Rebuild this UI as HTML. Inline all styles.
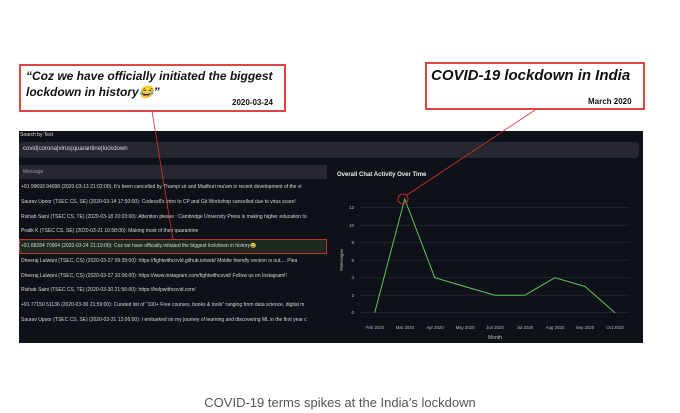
<!DOCTYPE html>
<html><head><meta charset="utf-8"><style>
body{margin:0;width:680px;height:413px;background:#fff;position:relative;overflow:hidden;font-family:"Liberation Sans",sans-serif}
.a{position:absolute}
.panel{left:19px;top:131px;width:624px;height:212px;background:#0e1117}
.row{position:absolute;left:21px;width:306px;font-size:5px;color:#d8d8d8;white-space:nowrap;overflow:hidden;height:14px;line-height:14px}
.box{border:2px solid #e04545;background:#fff;box-sizing:border-box}
</style></head><body>
<div class="a panel"></div>
<div class="a" style="left:20px;top:132px;font-size:5px;color:#ddd">Search by Text</div>
<div class="a" style="left:19px;top:142px;width:620px;height:16px;background:#262730;border-radius:3px"></div>
<div class="a" style="left:23px;top:146px;font-size:6px;color:#ddd">covid|corona|virus|quarantine|lockdown</div>
<div class="a" style="left:19px;top:165px;width:308px;height:14px;background:#262730"></div>
<div class="a" style="left:23px;top:169px;font-size:5px;color:#999">Message</div>
<div class="row" style="top:180px">+91 99693 94098 (2020-03-13 21:02:00): It's been cancelled by Thampi sir and Madhuri ma'am in recent development of the vi</div>
<div class="row" style="top:195px">Saurav Upoor (TSEC CS, SE) (2020-03-14 17:50:00): Codecell's Intro to CP and Git Workshop cancelled due to virus scare!</div>
<div class="row" style="top:210px">Rishab Saini (TSEC CS, TE) (2020-03-18 20:03:00): Attention please : Cambridge University Press is making higher education to</div>
<div class="row" style="top:224px">Pratik K (TSEC CS, SE) (2020-03-21 10:58:00): Making most of their quarantine</div>
<div class="a" style="left:19px;top:239px;width:308px;height:15px;background:#1c2a1f;border:1px solid #c0392b;box-sizing:border-box"></div>
<div class="row" style="top:239px">+91 88284 70904 (2020-03-24 21:19:00): Coz we have officially initiated the biggest lockdown in history😂</div>
<div class="row" style="top:254px">Dheeraj Lalwani (TSEC, CS) (2020-03-27 09:39:00): https://fightwithcovid.github.io/web/  Mobile friendly version is out.... Plea</div>
<div class="row" style="top:269px">Dheeraj Lalwani (TSEC, CS) (2020-03-27 10:06:00): https://www.instagram.com/fightwithcovid/  Follow us on Instagram!!</div>
<div class="row" style="top:283px">Rishab Saini (TSEC CS, TE) (2020-03-30 21:56:00): https://helpwithcovid.com/</div>
<div class="row" style="top:298px">+91 77150 51136 (2020-03-30 21:59:00): Curated list of "100+ Free courses, books &amp; tools" ranging from data science, digital m</div>
<div class="row" style="top:313px">Saurav Upoor (TSEC CS, SE) (2020-03-31 12:06:00): I embarked on my journey of learning and discovering  ML in the first year c</div>
<div class="a" style="left:337px;top:172px;font-size:6px;font-weight:bold;color:#eee">Overall Chat Activity Over Time</div>
<svg class="a" style="left:0;top:0" width="680" height="413">
<g stroke="#2a2e36" stroke-width="0.6">
<line x1="360" x2="630" y1="312.7" y2="312.7"/><line x1="360" x2="630" y1="295.2" y2="295.2"/><line x1="360" x2="630" y1="277.7" y2="277.7"/><line x1="360" x2="630" y1="260.2" y2="260.2"/><line x1="360" x2="630" y1="242.7" y2="242.7"/><line x1="360" x2="630" y1="225.2" y2="225.2"/><line x1="360" x2="630" y1="207.7" y2="207.7"/></g>
<g font-size="4.5" fill="#bbb" font-family="Liberation Sans" text-anchor="end">
<text x="354" y="314">0</text><text x="354" y="297">2</text><text x="354" y="279">4</text><text x="354" y="262">6</text><text x="354" y="244">8</text><text x="354" y="227">10</text><text x="354" y="209">12</text></g>
<g font-size="4.3" fill="#bbb" font-family="Liberation Sans" text-anchor="middle">
<text x="375" y="329">Feb 2020</text><text x="405" y="329">Mar 2020</text><text x="435" y="329">Apr 2020</text><text x="465" y="329">May 2020</text><text x="495" y="329">Jun 2020</text><text x="525" y="329">Jul 2020</text><text x="555" y="329">Aug 2020</text><text x="585" y="329">Sep 2020</text><text x="615" y="329">Oct 2020</text>
<text x="495" y="339" font-size="5">Month</text>
<text x="0" y="0" transform="translate(343,260) rotate(-90)">#Messages</text></g>
<polyline fill="none" stroke="#5fc35f" stroke-width="1" points="374.7,312.7 404.7,199 434.8,277.7 464.8,286.5 494.9,295.2 524.9,295.2 554.9,277.7 585,286.5 615,312.7"/>
<circle cx="403" cy="199" r="5" fill="none" stroke="#c62828" stroke-width="1"/>
<line x1="407" y1="195" x2="535" y2="110" stroke="#d03030" stroke-width="0.8"/>
<line x1="152" y1="111" x2="173" y2="240" stroke="#d03030" stroke-width="0.8"/>
</svg>
<div class="a box" style="left:19px;top:64px;width:267px;height:48px"></div>
<div class="a" style="left:26px;top:68px;font-size:12px;font-weight:bold;font-style:italic;line-height:16px;color:#111">“Coz we have officially initiated the biggest<br>lockdown in history😂”</div>
<div class="a" style="left:232px;top:98px;font-size:8px;font-weight:bold;color:#111">2020-03-24</div>
<div class="a box" style="left:425px;top:62px;width:220px;height:48px"></div>
<div class="a" style="left:431px;top:67px;font-size:15px;font-weight:bold;font-style:italic;color:#111">COVID-19 lockdown in India</div>
<div class="a" style="left:588px;top:97px;font-size:8px;font-weight:bold;color:#111">March 2020</div>
<div class="a" style="left:0;width:680px;top:395px;text-align:center;font-size:13px;color:#555">COVID-19 terms spikes at the India’s lockdown</div>
</body></html>
